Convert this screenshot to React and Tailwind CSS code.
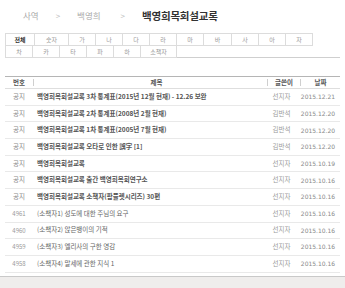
const FONT = { fontFamily: '"Noto Sans CJK KR", "Noto Sans", sans-serif' };

const TABS_TOP = [
  { label: '전체', w: 'w-[30px]', active: true },
  { label: '숫자', w: 'w-[35px]' },
  { label: '가', w: 'w-[28px]' },
  { label: '나', w: 'w-[28px]' },
  { label: '다', w: 'w-[28px]' },
  { label: '라', w: 'w-[28px]' },
  { label: '마', w: 'w-[28px]' },
  { label: '바', w: 'w-[29px]' },
  { label: '사', w: 'w-[28px]' },
  { label: '아', w: 'w-[28px]' },
  { label: '자', w: 'w-[28px]' },
];

const TABS_BOTTOM = [
  { label: '차', w: 'w-[28px]' },
  { label: '카', w: 'w-[28px]' },
  { label: '타', w: 'w-[28px]' },
  { label: '파', w: 'w-[28px]' },
  { label: '하', w: 'w-[28px]' },
  { label: '소책자', w: 'w-[37px]' },
];

const POSTS = [
  { no: '공지', title: '백영희목회설교록 3차 통계표(2015년 12월 현재) - 12.26 보완', by: '선지자', date: '2015.12.21', notice: true },
  { no: '공지', title: '백영희목회설교록 2차 통계표(2008년 2월 현재)', by: '김반석', date: '2015.12.20', notice: true },
  { no: '공지', title: '백영희목회설교록 1차 통계표(2005년 7월 현재)', by: '김반석', date: '2015.12.20', notice: true },
  { no: '공지', title: '백영희목회설교록 오타로 인한 誤字 [1]', by: '김반석', date: '2015.12.20', notice: true },
  { no: '공지', title: '백영희목회설교록', by: '선지자', date: '2015.10.19', notice: true },
  { no: '공지', title: '백영희목회설교록 출간 백영희목회연구소', by: '선지자', date: '2015.10.16', notice: true },
  { no: '공지', title: '백영희목회설교록 소책자(팜플렛시리즈) 30편', by: '선지자', date: '2015.10.16', notice: true },
  { no: '4961', title: '(소책자1) 성도에 대한 주님의 요구', by: '선지자', date: '2015.10.16' },
  { no: '4960', title: '(소책자2) 앉은뱅이의 기적', by: '선지자', date: '2015.10.16' },
  { no: '4959', title: '(소책자3) 엘리사의 구한 영감', by: '선지자', date: '2015.10.16' },
  { no: '4958', title: '(소책자4) 말세에 관한 지식 1', by: '선지자', date: '2015.10.16' },
];

function Tab({ label, w, active, first }) {
  return (
    <div
      className={`${w} h-[13px] flex items-center justify-center border border-[#dcdcdc] bg-white text-[6px] leading-[1.2]
                  ${first ? '' : '-ml-px'} ${active ? 'font-bold text-[#333]' : 'text-[#999]'}`}
    >
      {label}
    </div>
  );
}

function HeadCell({ children, sep, className = '' }) {
  return (
    <div className="flex items-center h-full">
      {sep && <span className="h-[7px] w-px bg-[#cfcfcf]" />}
      <span className={`flex-1 text-center ${className}`}>{children}</span>
    </div>
  );
}

export default function App() {
  return (
    <div className="w-[345px] h-[288px] bg-white flex flex-col overflow-hidden" style={FONT}>
      {/* breadcrumb */}
      <div className="h-[33px] pl-[23px] pb-[2px] flex items-center gap-[17px]">
        <span className="text-[8.5px] text-[#aaa]">사역</span>
        <span className="text-[8px] text-[#bbb]">&gt;</span>
        <span className="text-[8.5px] text-[#aaa]">백영희</span>
        <span className="text-[8px] text-[#bbb] ml-[3px]">&gt;</span>
        <span className="text-[10.5px] font-bold text-[#333] tracking-[-0.2px]">백영희목회설교록</span>
      </div>

      {/* initial tabs */}
      <div className="mx-[5px]">
        <div className="flex">
          {TABS_TOP.map((t, i) => <Tab key={t.label} {...t} first={i === 0} />)}
        </div>
        <div className="flex -mt-px">
          {TABS_BOTTOM.map((t, i) => <Tab key={t.label} {...t} first={i === 0} />)}
        </div>
        <div className="h-px bg-[#cfcfcf] -mt-px" />
      </div>

      {/* board */}
      <div className="mx-[5px] mt-[18px] text-[6.5px] leading-[1.2]">
        <div className="grid grid-cols-[28px_234px_33px_40px] h-[13px] border-t border-[#b5b5b5] border-b border-b-[#dedede] text-[#555] font-bold">
          <HeadCell>번호</HeadCell>
          <HeadCell sep className="pl-[12px]">제목</HeadCell>
          <HeadCell sep>글쓴이</HeadCell>
          <HeadCell sep>날짜</HeadCell>
        </div>
        {POSTS.map((p, i) => (
          <div
            key={i}
            className="grid grid-cols-[28px_234px_33px_40px] h-[16.7px] items-center border-b border-[#e9e9e9]"
          >
            <span className={`text-center ${p.notice ? 'text-[#888]' : 'text-[6px] text-[#999]'}`}>{p.no}</span>
            <span className={`pl-[4px] whitespace-nowrap ${p.notice ? 'font-bold text-[#555]' : 'text-[#666]'}`}>{p.title}</span>
            <span className="text-center text-[#999] pr-[4px]">{p.by}</span>
            <span className="text-center text-[6px] text-[#888] pr-[4px]" style={{ fontFamily: '"DejaVu Sans", sans-serif' }}>{p.date}</span>
          </div>
        ))}
      </div>

      <div className="mt-[3px] flex-1 border-t border-[#c9c9c9] bg-[#efedec]" />
    </div>
  );
}
